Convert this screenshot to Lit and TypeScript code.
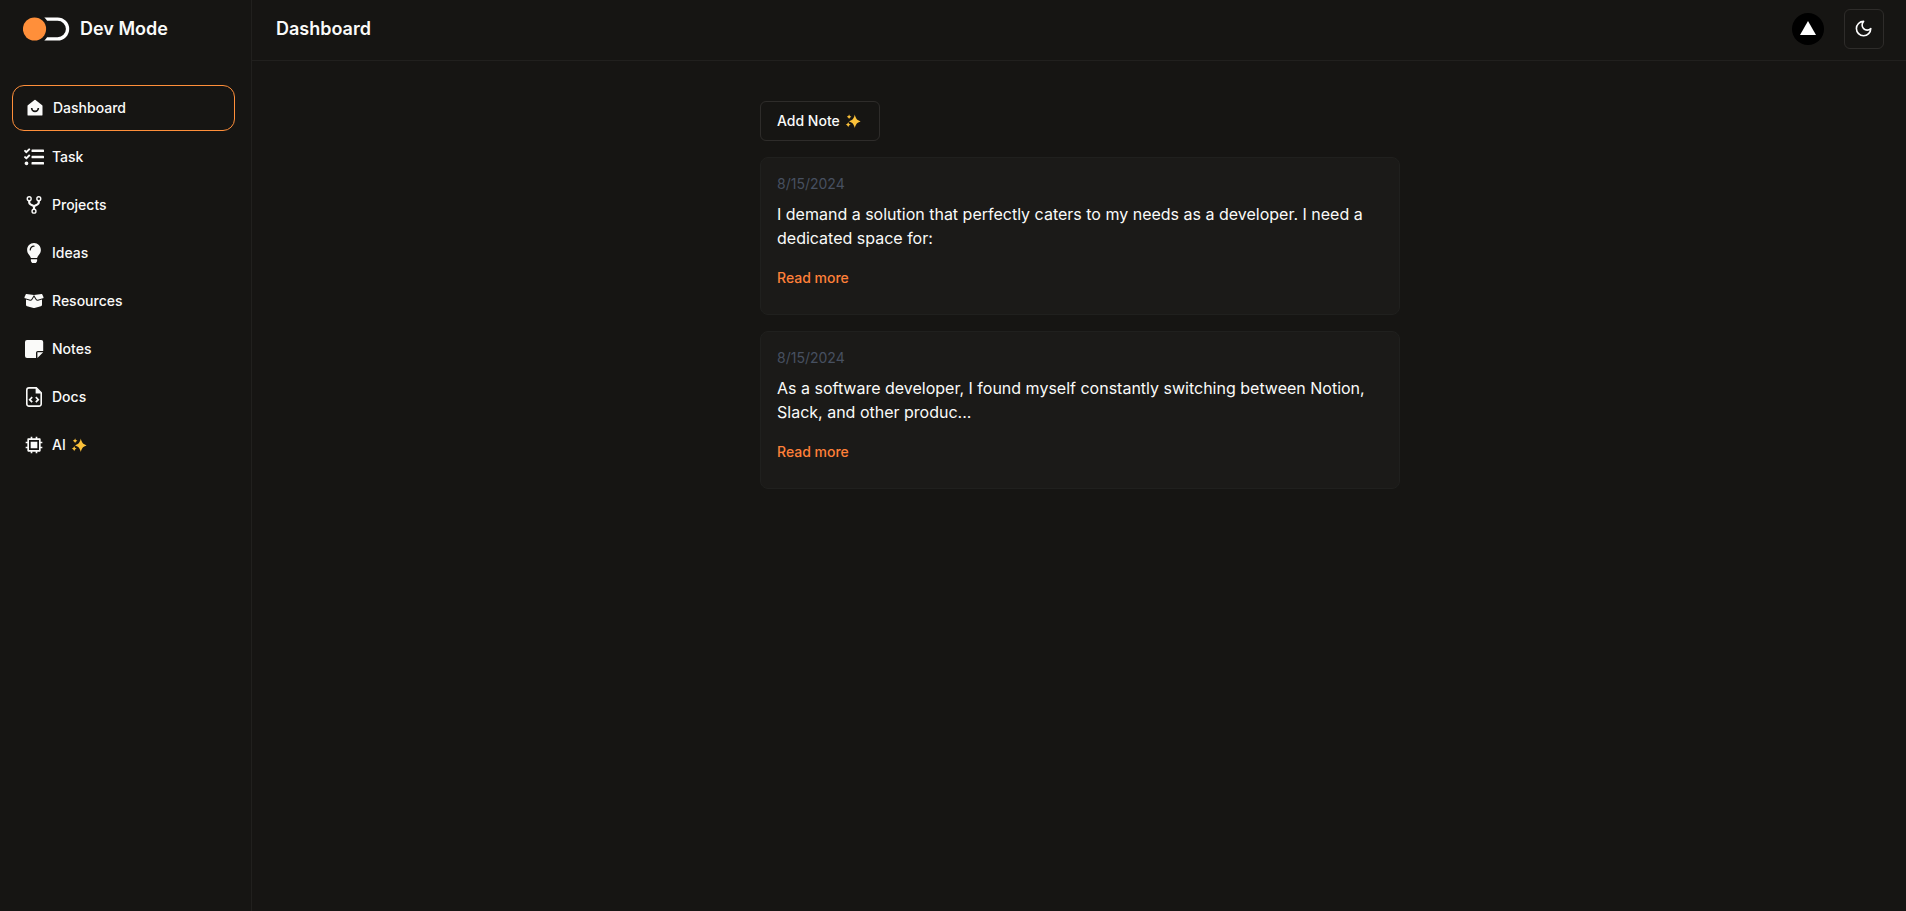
import { LitElement, html, css, svg, nothing } from "lit";
import { customElement, property } from "lit/decorators.js";

const sparkles = html`<svg class="spark" width="18" height="18" viewBox="0 0 18 18" fill="#fbc13a">
  <path d="M10.800 2.600C11.700 6.600 12.900 8.200 16.600 9.400c-3.700 1.200-4.900 2.800-5.800 6.700C9.900 12.200 8.700 10.600 5 9.400c3.700-1.200 4.900-2.800 5.800-6.800z" />
  <path d="M5.100 2.300c.45 1.500.9 2 2.300 2.500-1.400.5-1.850 1-2.300 2.500-.45-1.500-.9-2-2.300-2.500 1.400-.5 1.850-1 2.300-2.500z" />
  <path d="M4.200 9.900c.45 1.600 1 2.200 2.500 2.700-1.500.5-2.050 1.100-2.500 2.700-.45-1.600-1-2.200-2.500-2.700 1.500-.5 2.050-1.100 2.500-2.700z" />
</svg>`;

interface Icon {
  box: string;
  shape: unknown;
}

const icons: Record<string, Icon> = {
  home: {
    box: "0 0 24 24",
    shape: svg`<path d="M20 21H4a1 1 0 0 1-1-1V9.490a1 1 0 0 1 .386-.79l8-6.222a1 1 0 0 1 1.228 0l8 6.222a1 1 0 0 1 .386.79V20a1 1 0 0 1-1 1zM7 12a5 5 0 0 0 10 0h-2a3 3 0 0 1-6 0H7z"/>`,
  },
  task: {
    box: "0 0 512 512",
    shape: svg`<path d="M139.610 35.500a12 12 0 0 0-17 0L58.930 98.810l-22.700-22.120a12 12 0 0 0-17 0L3.530 92.410a12 12 0 0 0 0 17l47.590 47.400a12.780 12.780 0 0 0 17.610 0l15.590-15.620L156.520 69a12.090 12.090 0 0 0 .09-17zm0 159.190a12 12 0 0 0-17 0l-63.680 63.720-22.700-22.100a12 12 0 0 0-17 0L3.530 252a12 12 0 0 0 0 17L51 316.500a12.770 12.770 0 0 0 17.600 0l15.700-15.690 72.200-72.220a12 12 0 0 0 .09-16.900zM64 368c-26.490 0-48.590 21.500-48.590 48S37.530 464 64 464a48 48 0 0 0 0-96zm432 16H208a16 16 0 0 0-16 16v32a16 16 0 0 0 16 16h288a16 16 0 0 0 16-16v-32a16 16 0 0 0-16-16zm0-320H208a16 16 0 0 0-16 16v32a16 16 0 0 0 16 16h288a16 16 0 0 0 16-16V80a16 16 0 0 0-16-16zm0 160H208a16 16 0 0 0-16 16v32a16 16 0 0 0 16 16h288a16 16 0 0 0 16-16v-32a16 16 0 0 0-16-16z"/>`,
  },
  fork: {
    box: "0 0 20 20",
    shape: svg`<g fill="none" stroke="currentColor"><circle cx="5.200" cy="3.700" r="1.950" stroke-width="1.400"/><circle cx="14.800" cy="3.700" r="1.950" stroke-width="1.400"/><circle cx="10" cy="16.200" r="1.950" stroke-width="1.400"/><path stroke-width="2.200" d="M5.200 5.800v1.400c0 1.200.5 1.700 1.300 2.200L10 11.300l3.500-1.900c.8-.5 1.300-1 1.300-2.200V5.800M10 11v3.200"/></g>`,
  },
  bulb: {
    box: "0 0 352 512",
    shape: svg`<path d="M96.060 454.350c.01 6.290 1.870 12.450 5.360 17.690l17.090 25.690a31.990 31.990 0 0 0 26.640 14.280h61.710a31.990 31.990 0 0 0 26.640-14.280l17.090-25.690a31.989 31.989 0 0 0 5.360-17.690l.04-38.350H96.010l.05 38.350zM0 176c0 44.370 16.450 84.850 43.560 115.780 16.520 18.850 42.360 58.230 52.210 91.450.04.26.07.52.11.78h160.240c.04-.26.07-.51.11-.78 9.850-33.220 35.690-72.600 52.210-91.450C335.550 260.850 352 220.370 352 176 352 78.610 272.910-.3 175.450 0 73.440.31 0 82.970 0 176zm176-80c-44.110 0-80 35.890-80 80 0 8.840-7.160 16-16 16s-16-7.160-16-16c0-61.760 50.240-112 112-112 8.840 0 16 7.160 16 16s-7.160 16-16 16z"/>`,
  },
  box: {
    box: "0 0 640 512",
    shape: svg`<path d="M58.900 42.100c3-6.100 9.600-9.600 16.300-8.700L320 64 564.800 33.400c6.700-.8 13.300 2.700 16.300 8.700l41.700 83.400c9 17.900-.6 39.600-19.800 45.100L439.600 217.300c-13.900 4-28.800-1.900-36.200-14.300L320 64 236.600 203c-7.400 12.400-22.300 18.300-36.200 14.300L37.100 170.600c-19.300-5.500-28.800-27.200-19.800-45.100L58.900 42.100zM321.100 128l54.900 91.400c14.900 24.800 44.600 36.600 72.500 28.600L576 211.600v167c0 22-15 41.200-36.400 46.600l-204.100 51c-10.200 2.600-20.900 2.600-31 0l-204.100-51C79 419.700 64 400.500 64 378.500v-167L191.600 248c27.800 8 57.600-3.800 72.500-28.600L318.900 128h2.200z"/>`,
  },
  note: {
    box: "0 0 20 20",
    shape: svg`<path d="M3 1h14.200a2 2 0 0 1 2 2v8.900h-5.400a1.800 1.800 0 0 0-1.800 1.800v5.400H3a2 2 0 0 1-2-2V3a2 2 0 0 1 2-2zM13.400 13.300h5.800l-5.800 5.800z"/>`,
  },
  doc: {
    box: "0 0 20 20",
    shape: svg`<path d="M12.300.9H5A2.200 2.200 0 0 0 2.800 3.100v13.800A2.200 2.200 0 0 0 5 19.100h10a2.200 2.200 0 0 0 2.200-2.200V5.800z" fill="none" stroke="currentColor" stroke-width="1.600"/><path d="M11.600.8v5.600h5.800z"/><path d="M8.200 10.200 5.700 12.700l2.500 2.500M11.800 10.200l2.500 2.500-2.500 2.500" fill="none" stroke="currentColor" stroke-width="1.700"/>`,
  },
  cpu: {
    box: "0 0 24 24",
    shape: svg`<path d="M6 18h12V6H6v12zm8 2h-4v2H8v-2H5a1 1 0 0 1-1-1v-3H2v-2h2v-4H2V8h2V5a1 1 0 0 1 1-1h3V2h2v2h4V2h2v2h3a1 1 0 0 1 1 1v3h2v2h-2v4h2v2h-2v3a1 1 0 0 1-1 1h-3v2h-2v-2zM8 8h8v8H8V8z"/>`,
  },
};

const links = [
  { label: "Dashboard", icon: "home" },
  { label: "Task", icon: "task" },
  { label: "Projects", icon: "fork" },
  { label: "Ideas", icon: "bulb" },
  { label: "Resources", icon: "box" },
  { label: "Notes", icon: "note" },
  { label: "Docs", icon: "doc" },
  { label: "AI", icon: "cpu", sparkle: true },
];

const notes = [
  {
    date: "8/15/2024",
    text: "I demand a solution that perfectly caters to my needs as a developer. I need a dedicated space for:",
  },
  {
    date: "8/15/2024",
    text: "As a software developer, I found myself constantly switching between Notion, Slack, and other produc...",
  },
];

@customElement("side-bar")
export class SideBar extends LitElement {
  @property() active = "Dashboard";

  static styles = css`
    :host {
      display: block;
      box-sizing: border-box;
      width: 252px;
      flex: none;
      border-right: 1px solid #21201e;
    }
    .brand {
      display: flex;
      align-items: center;
      gap: 10px;
      height: 24px;
      padding: 17px 0 44px 23px;
      font-size: 18px;
      font-weight: 600;
      line-height: 24px;
    }
    .logo {
      display: block;
    }
    .nav {
      display: flex;
      flex-direction: column;
      gap: 4px;
      padding: 0 16px 0 12px;
    }
    .item {
      display: flex;
      align-items: center;
      gap: 8px;
      padding: 12px;
      font-size: 14px;
      line-height: 20px;
      font-weight: 500;
      border-radius: 12px;
    }
    .item.active {
      border: 1px solid #ff8f3a;
    }
    .icon {
      display: block;
      flex: none;
    }
    .spark {
      margin-left: -4px;
    }
  `;

  render() {
    return html`
      <div class="brand">
        <svg class="logo" width="47" height="24" viewBox="0 0 47 24">
          <circle cx="11.500" cy="12" r="11.600" fill="#ff8f3a" />
          <path
            d="M21.300.4H34.600a11.600 11.600 0 0 1 0 23.200H21.300a18 18 0 0 0 2.800-3.300H34.600a8.300 8.300 0 0 0 0-16.600H24.100A18 18 0 0 0 21.300.4z"
            fill="#fff"
          />
        </svg>
        <span>Dev Mode</span>
      </div>
      <nav class="nav">
        ${links.map(
          (l) => html`<a class="item ${l.label === this.active ? "active" : ""}">
            <svg class="icon" width="20" height="20" viewBox=${icons[l.icon].box} fill="currentColor">
              ${icons[l.icon].shape}
            </svg>
            <span>${l.label}</span>${l.sparkle ? sparkles : nothing}
          </a>`
        )}
      </nav>
    `;
  }
}

@customElement("top-bar")
export class TopBar extends LitElement {
  static styles = css`
    :host {
      display: flex;
      align-items: center;
      box-sizing: border-box;
      height: 61px;
      padding: 9px 22px 11px 24px;
      border-bottom: 1px solid #21201e;
    }
    .title {
      flex: 1;
      margin: 0;
      font-size: 18px;
      line-height: 28px;
      font-weight: 600;
    }
    .avatar {
      display: block;
      margin-right: 20px;
    }
    .toggle {
      display: flex;
      align-items: center;
      justify-content: center;
      box-sizing: border-box;
      width: 40px;
      height: 40px;
      border: 1px solid #2e2c2a;
      border-radius: 6px;
    }
    .moon {
      display: block;
      margin: 0 1px 1px 0;
    }
  `;

  render() {
    return html`
      <h1 class="title">Dashboard</h1>
      <svg class="avatar" width="32" height="32" viewBox="0 0 32 32">
        <circle cx="16" cy="16" r="16" fill="#000" />
        <path d="M16 8l8 13.900H8z" fill="#fff" />
      </svg>
      <div class="toggle">
        <svg class="moon" width="19.200" height="19.200" viewBox="0 0 24 24" fill="none" stroke="#fff" stroke-width="2" stroke-linecap="round" stroke-linejoin="round">
          <path d="M12 3a6 6 0 0 0 9 9 9 9 0 1 1-9-9Z" />
        </svg>
      </div>
    `;
  }
}

@customElement("note-card")
export class NoteCard extends LitElement {
  @property() date = "";
  @property() text = "";

  static styles = css`
    :host {
      display: block;
      box-sizing: border-box;
      padding: 16px;
      background: #1b1a18;
      border: 1px solid #20201e;
      border-radius: 8px;
    }
    .date {
      font-size: 14px;
      line-height: 20px;
      color: #475060;
    }
    .text {
      margin: 8px 0;
      font-size: 16px;
      line-height: 24px;
    }
    .more {
      display: flex;
      align-items: center;
      height: 40px;
      font-size: 14px;
      line-height: 20px;
      font-weight: 500;
      color: #ff8038;
    }
  `;

  render() {
    return html`
      <div class="date">${this.date}</div>
      <p class="text">${this.text}</p>
      <a class="more">Read more</a>
    `;
  }
}

@customElement("app-root")
export class AppRoot extends LitElement {
  static styles = css`
    :host {
      display: flex;
      height: 100vh;
      background: #161513;
      color: #fafaf9;
      font-family: Inter, "Liberation Sans", sans-serif;
    }
    .page {
      flex: 1;
      min-width: 0;
    }
    .content {
      display: flex;
      flex-direction: column;
      gap: 16px;
      width: 640px;
      margin: 0 auto;
      padding: 40px 0 0 2px;
    }
    .add {
      display: flex;
      align-items: center;
      align-self: flex-start;
      box-sizing: border-box;
      width: 120px;
      height: 40px;
      padding: 0 16px;
      border: 1px solid #2e2c2a;
      border-radius: 6px;
      font-size: 14px;
      line-height: 20px;
      font-weight: 500;
      white-space: nowrap;
    }
    .spark {
      flex: none;
      margin-left: 4px;
    }
  `;

  render() {
    return html`
      <side-bar active="Dashboard"></side-bar>
      <div class="page">
        <top-bar></top-bar>
        <main class="content">
          <div class="add"><span>Add Note</span>${sparkles}</div>
          ${notes.map((n) => html`<note-card .date=${n.date} .text=${n.text}></note-card>`)}
        </main>
      </div>
    `;
  }
}
